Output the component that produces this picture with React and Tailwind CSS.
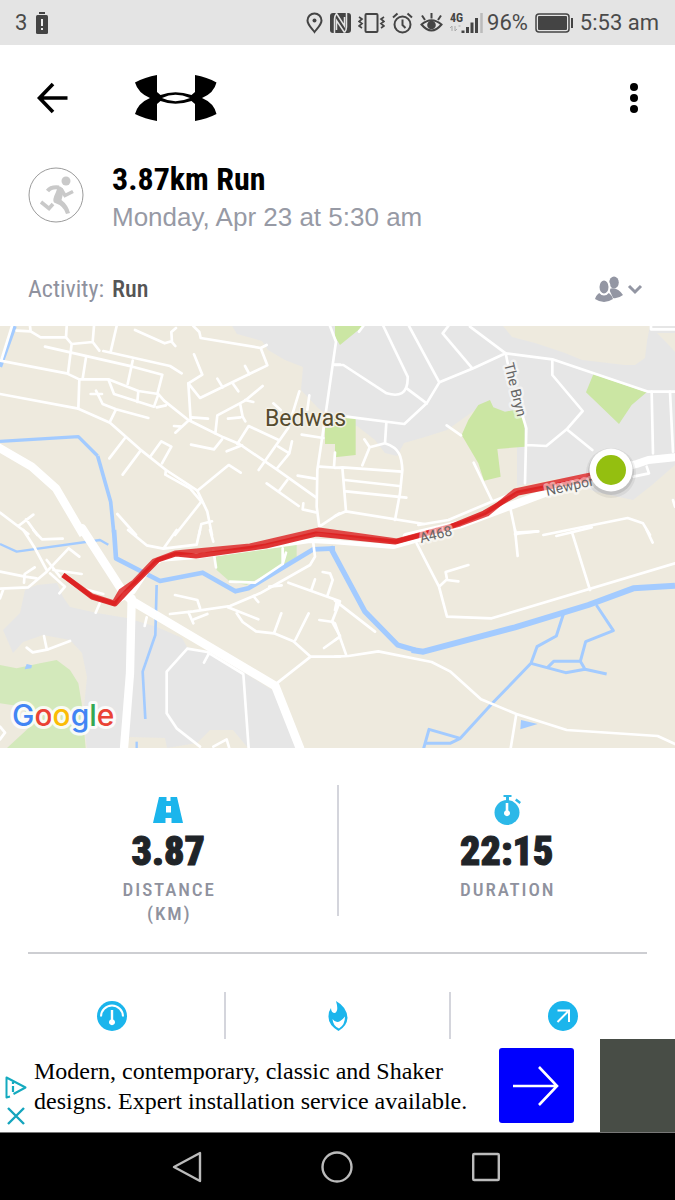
import React from "react";

const narrow = "font-['Roboto_Condensed','Liberation_Sans_Narrow',Roboto,sans-serif]";

/* Map tiles are drawn at three times screen scale, each with its own origin. */
function Tile({ x, y, children, ...rest }) {
  return (
    <g transform={`translate(${x} ${y}) scale(0.33333)`} {...rest}>
      {children}
    </g>
  );
}

const roadsNW = [
  "M0 122 L200 160 L238 178 L325 178 L415 213 L475 222 L492 242 L565 300 L670 352 L718 372 L830 448 L948 532",
  "M0 222 L235 266 L330 308 L420 388 L498 450 L592 512 L622 575 L636 645",
  "M498 450 L496 464 L570 505 L604 545 L525 645 M592 512 L686 435 L722 458 M636 604 L604 612 L597 645",
  "M50 32 L92 34 L122 52 L198 52 L215 72 L278 66 L298 92 M198 52 L200 20 M278 66 L282 18 M215 72 L204 160 M92 34 L90 18",
  "M350 18 L332 95 M310 93 L510 138 L545 160 M135 80 L398 140 L487 164 L472 222 M398 122 L383 192 M258 112 L248 176 M238 178 L235 266",
  "M325 178 L342 222 L462 260 L474 226 M415 213 L412 246 M470 262 L498 256",
  "M272 222 L306 222 M288 212 L308 252 L348 268 L445 294 M348 268 L330 305",
  "M405 30 L494 70 L514 64 L526 78 M528 24 L514 36 L516 66 M580 18 L598 36 L602 54 L782 84 L800 75 M782 84 L802 136 L600 234 L565 190 L607 164 L582 103",
  "M565 190 L572 300 M575 292 L624 296 M565 302 L526 338 M522 318 L546 320 M735 138 L748 162 M652 176 L668 202 M698 190 L715 214",
  "M788 198 L735 242 L652 286 L646 340 M720 250 L728 290 L736 304 M684 296 L722 292 M735 240 L760 246 M573 374 L642 388 L666 358 M680 394 L726 376",
  "M712 372 L746 318 L836 360 M898 214 L864 325 L776 450 M928 226 L922 270 M835 380 L868 400 L832 444 M868 400 L876 364 M820 250 L842 270",
  "M905 344 L970 354 M960 440 L1020 444 M1005 398 L1002 440 M893 467 L946 476 M800 490 L896 558 M862 480 L838 512 M910 550 L908 568 L948 577",
  "M990 18 L1008 65 L970 330 L952 450 L950 560 L958 620 L1018 580 M1004 134 L1020 134",
  "M375 354 L328 415 M420 394 L368 464 M452 408 L484 364 L514 380 L486 430 M352 582 L408 645 M0 578 L85 642 M100 584 L55 618 M78 598 L112 645",
];
const roadsNE = [
  "M405 20 L512 100 L652 118 L940 215 L1020 215 M512 100 L415 145 L313 187 L275 250 L208 312 L35 290",
  "M145 18 L218 170 C220 225 190 230 155 220 L25 135 L0 135 M215 205 L275 250 M222 18 L313 187 M340 18 L323 40 L412 145 M85 18 L72 35",
  "M512 100 L518 130 M562 285 L574 325 L570 490 M574 375 L634 378 L695 328 L743 273 L652 165 L652 120 M695 328 L772 390",
  "M154 308 L150 370 L104 382 L82 436 M104 382 L88 358 M150 370 C195 385 200 410 202 450 L195 520 L180 600",
  "M0 444 L22 442 L200 455 M22 442 L33 574 M30 480 L192 498 M34 514 L214 533 M0 588 L33 574 L268 612",
  "M335 316 L378 346 M416 428 L470 540 M250 615 L340 600 L470 545 L545 515 M950 215 L954 400 M1005 215 L1014 395 M948 18 L948 28 L1020 28",
  "M525 560 L543 645 M625 645 L878 594 L924 610 L945 645 M543 638 L610 634 M1014 540 L1020 560",
  "M895 470 L942 460 L935 440",
];
const roadsSW = [
  "M70 0 L105 55 L140 120 M100 0 L126 28 L188 26 M0 125 L75 140 L110 145 M0 176 L85 172 L140 125 L206 55 L238 80 M72 158 L74 132 L104 112 M0 205 L10 178",
  "M160 120 L245 132 M140 90 L180 140 M150 130 L195 170 L178 190 M255 178 L310 192 M300 218 L287 248 M384 0 L440 46 L490 56 L590 44 L600 0 M490 56 L530 0 M630 0 L640 35 M640 60 L648 112",
  "M80 353 L98 367 L145 358 L210 333 M132 318 L140 356 M440 262 L434 288 M0 590 L15 608 L0 628",
  "M525 195 L592 210 L600 234 M510 252 L580 244 L690 228 L780 190 L930 105 L945 80 L940 40 M565 246 L580 280 M582 268 L622 252 M760 198 L775 216",
  "M690 155 L765 158 L848 102 L858 68 M808 170 L845 166 M848 102 L848 55",
  "M684 232 L775 268 M710 250 L728 276 L768 304 L822 310 L880 334 L932 380 L1020 380 M932 380 L830 460 M822 310 L844 250 M886 330 L926 250",
  "M865 158 L1020 214 L996 275 L1020 318 M968 126 L990 130 L998 150 L982 198 M945 148 L934 180 M958 270 L1000 276 M972 354 L1020 320",
  "M562 356 L622 366 L730 432 L746 655 M562 356 L500 425 L500 550 L530 595 L600 650 M628 368 L612 398 M640 650 L680 628 L688 655",
];
const roadsSE = [
  "M0 380 L40 378 L130 364 L290 396 L345 424 L438 508 L544 552 L695 600 L968 618 L1020 642 M544 552 L527 655",
  "M245 40 L312 170 L336 260 L470 265 L1020 100 M312 170 L336 148 L332 126 L400 105 M336 150 L370 154",
  "M540 0 L548 78 M540 12 L608 4 M664 18 L770 -8 M712 10 L765 180 M935 0 L953 38 M0 212 L120 305 M5 215 L0 240 M0 280 L34 376 M0 330 L12 322",
];

function Paths({ items }) {
  return items.map((d) => <path key={d} d={d} />);
}

function RouteMap() {
  return (
    <svg className="block w-full" viewBox="0 326 675 422" role="img" aria-label="Route map of Bedwas">
      <rect x="0" y="326" width="675" height="422" fill="#eeeade" />
      <g fill="#e6e6e6">
        <path d="M232 326L237 334L262 341L268 350L285 360L303 367L301 390L318 408L340 424L357 426L375 440L385 453L397 456L404 443L425 437L447 430L475 410L520 430L517 447L517 486L560 478L596 492L633 500L652 485L675 465V326Z" />
        <path d="M25 590L37 585L57 583L63 597L70 607L97 613L127 618L157 627L182 638L187 647L207 652L240 670L277 693L300 748H248L233 730H210L197 743L167 748L165 738L130 737L120 748H87L83 717L87 677L82 653L70 640L43 635L23 642L13 653L3 630L20 613Z" />
      </g>
      <g fill="#eeeade">
        <path d="M503 326L512 337L535 343L565 353L582 360L625 365L635 365L645 358L647 341L650 326Z" />
        <path d="M657 333H675V352L666 342Z" />
      </g>
      <g fill="#cbe6a3">
        <Tile x="335" y="320">
          <path d="M0 18H85L15 75L0 50ZM-10 295H62V405L0 412L0 372L-10 370Z" />
          <path d="M465 240L475 262L510 275L540 270L568 300L570 380L487 387L497 470L447 482L430 430L380 345L400 300L430 255Z" />
          <path d="M775 163L935 217L890 255L852 312L753 217Z" />
        </Tile>
        <path d="M325 428H338V456H337V444H325Z" />
      </g>
      <Tile x="0" y="530" fill="#d3e9bb">
        <path d="M0 405L50 415L120 400L170 390L210 420L235 460L245 520L257 655H20L90 590L70 530L0 520Z" />
        <path d="M645 80L650 120L690 155L740 165L850 105L890 80V40L840 45Z" />
      </Tile>

      <g fill="none" stroke="#a3cbff" strokeLinejoin="round">
        <Tile x="0" y="320">
          <path d="M44 18L0 140" strokeWidth="13" />
          <path d="M0 364L235 350L293 408" strokeWidth="10" />
          <path d="M293 408L332 545L342 645" strokeWidth="11" />
        </Tile>
        <Tile x="0" y="530">
          <path d="M342 0L348 85L480 153L608 128L706 184L745 175L940 58L1005 55" strokeWidth="14" />
          <path d="M0 42L50 65L300 30L325 44" strokeWidth="7" />
          <path d="M470 165L466 315L428 425L436 567" strokeWidth="8" />
          <path d="M410 635V655" strokeWidth="7" />
          <path d="M74 418L80 402L96 406L94 415Z" fill="#a3cbff" stroke="none" />
        </Tile>
        <Tile x="335" y="530">
          <path d="M-15 50L90 245L188 345L240 360" strokeWidth="16" />
          <path d="M230 360L265 365L540 292L760 225L895 175L1020 167" strokeWidth="18" />
          <path d="M686 250L664 318L606 350L588 400L472 520L376 625L282 598L266 655M376 625L345 640H272M588 400L692 428L750 418L815 432M638 412L656 394H736L750 418M736 394L752 335L835 302L784 225" strokeWidth="9" />
          <path d="M558 570L608 582L556 598Z" fill="#a3cbff" stroke="none" />
        </Tile>
      </g>

      <g fill="none" stroke="#ffffff" strokeWidth="8" strokeLinejoin="round" strokeLinecap="round">
        <Tile x="0" y="320">
          <Paths items={roadsNW} />
          <path d="M36 18L4 120" />
          <path d="M-15 376L95 440L168 505L250 645" strokeWidth="25" strokeLinecap="butt" />
        </Tile>
        <Tile x="335" y="320">
          <Paths items={roadsNE} />
          <path d="M215 650L380 612L560 545L760 470L905 432L940 420L1020 412" strokeWidth="24" />
        </Tile>
        <Tile x="0" y="530">
          <Paths items={roadsSW} />
          <path d="M246 -5L372 190L400 215L826 468L900 655" strokeWidth="26" />
          <path d="M395 205L390 430L372 655" strokeWidth="25" />
          <path d="M345 218L400 185L450 110L485 88L590 80L930 32L1005 36L1180 50L1260 28" strokeWidth="14" />
        </Tile>
        <Tile x="335" y="530">
          <Paths items={roadsSE} />
        </Tile>
      </g>

      <g fill="none" stroke="#dc1f1f" strokeLinejoin="round">
        <path d="M63 575L92 597L115 604L132 586L158 560L176 554L196 556L266 546L316 534L395 542L447 528L484 513L518 493L600 477" strokeWidth="5" opacity=".9" />
        <path d="M63 575L92 596L114 603L121 591L134 582L154 561L175 553L250 546L319 530L397 541L460 524L487 514L515 491L600 473" strokeWidth="5" opacity=".8" />
      </g>

      <g className="font-[Roboto,sans-serif]" paintOrder="stroke" strokeLinejoin="round">
        <text x="265" y="426" fontSize="23" fill="#554b2f" stroke="#f4f1e8" strokeWidth="3">Bedwas</text>
        <g fontSize="14" fill="#666" stroke="#fff" strokeOpacity=".5" strokeWidth="5">
          <text transform="translate(504 364) rotate(76)">The Bryn</text>
          <text transform="translate(421 543) rotate(-14)">A468</text>
          <text transform="translate(547 496) rotate(-13)">Newpor</text>
        </g>
      </g>
      <circle cx="611" cy="473" r="25" fill="#000" opacity=".06" />
      <circle cx="611" cy="472" r="23" fill="#000" opacity=".1" />
      <circle cx="611" cy="470" r="21.500" fill="#fff" />
      <circle cx="611" cy="470" r="15" fill="#94bf10" />

      <text x="12" y="726" fontSize="30" fontWeight="500" className="font-[Inter,sans-serif]" stroke="#fff" strokeOpacity=".85" strokeWidth="6" strokeLinejoin="round" paintOrder="stroke">
        <tspan fill="#4285f4">G</tspan>
        <tspan fill="#ea4335">o</tspan>
        <tspan fill="#fbbc05">o</tspan>
        <tspan fill="#4285f4">g</tspan>
        <tspan fill="#34a853">l</tspan>
        <tspan fill="#ea4335">e</tspan>
      </text>
    </svg>
  );
}

function StatusBar() {
  return (
    <div className="flex h-[45px] items-center justify-between bg-[#e4e4e4] pr-4 pl-[15px] font-[Roboto,sans-serif] text-[22px] leading-none text-[#4a4a4a]">
      <div className="flex items-center gap-2">
        <span>3</span>
        <svg className="h-[22px] w-[14px]" viewBox="0 0 14 22" fill="#444">
          <rect x="4" y="0" width="6" height="2" />
          <rect x="1" y="3" width="12" height="19" rx="1.5" />
          <path d="M6 7h2v7H6zM6 16h2v2H6z" fill="#eee" />
        </svg>
      </div>
      <div className="flex items-center gap-1">
        <div className="flex items-center gap-[7px]">
          <svg className="h-[22px] w-[17px]" viewBox="0 0 17 22" fill="none" stroke="#444" strokeWidth="2">
            <path d="M8.500 20C5 15.500 1.500 12.500 1.500 8.500a7 7 0 0 1 14 0c0 4-3.500 7-7 11.500z" />
            <circle cx="8.500" cy="8.500" r="2" fill="#444" stroke="none" />
          </svg>
          <svg className="h-[22px] w-[21px]" viewBox="0 0 21 22">
            <rect x="0" y="1" width="21" height="20" rx="3" fill="#444" />
            <path d="M6.500 1.500Q4.500 4 4.500 7V21M6.500 1.500L14.500 14V5M14.500 20.500Q16.500 18 16.500 15V1M14.500 20.500L6.500 8.500V18" stroke="#e4e4e4" strokeWidth="1.500" fill="none" />
          </svg>
          <svg className="h-[22px] w-[27px]" viewBox="0 0 27 22" fill="none" stroke="#444" strokeWidth="2">
            <rect x="7.500" y="2" width="12" height="18" rx="1" />
            <path d="M1 5l3 2-3 2.500 3 2-3 2.500 3 2M26 5l-3 2 3 2.500-3 2 3 2.500-3 2" strokeWidth="1.700" />
          </svg>
          <svg className="h-[22px] w-[21px]" viewBox="0 0 21 22" fill="none" stroke="#444" strokeWidth="2">
            <circle cx="10.500" cy="12.500" r="8" />
            <path d="M10.500 7.500v5.500l3 3M1 5.500l4.500-4M20 5.500L15.500 1.500" />
          </svg>
          <svg className="h-[22px] w-[23px]" viewBox="0 0 23 22" fill="none" stroke="#444" strokeWidth="2">
            <path d="M1.500 12.500Q11.500 4 21.500 12.500 11.500 24.500 1.500 12.500zM11.500 6.500V1M5 8L2 3.500M18 8l3-4.500" />
            <circle cx="11.500" cy="13" r="4.300" fill="#444" stroke="none" />
          </svg>
          <svg className="h-[22px] w-[33px]" viewBox="0 0 33 22">
            <text x="0" y="10" fontSize="12" fontWeight="700" fill="#444" className="font-['Roboto_Condensed',Roboto,sans-serif]">4G</text>
            <path d="M2 19v-5L0 16M5 14v5l2-2M8.500 14h2" stroke="#aaa" fill="none" />
            <path d="M13 18.500V21M17.500 15v6M22 10.500V21M26.500 6v15" stroke="#444" strokeWidth="3" />
            <path d="M31.500 1v20" stroke="#bbb" strokeWidth="2.500" />
          </svg>
        </div>
        <div className="flex items-center gap-[7px]">
          <span>96%</span>
          <svg className="h-[20px] w-[38px]" viewBox="0 0 38 20">
            <rect x="1" y="1" width="33" height="18" rx="3" fill="none" stroke="#444" strokeWidth="1.500" />
            <rect x="3" y="3" width="29" height="14" rx="1" fill="#444" />
            <rect x="36" y="5" width="2" height="10" fill="#444" />
          </svg>
          <span>5:53 am</span>
        </div>
      </div>
    </div>
  );
}

function Toolbar() {
  return (
    <header className="flex h-[105px] items-center justify-between px-[36px]">
      <div className="flex items-center gap-[66px]">
        <button type="button" aria-label="Back">
          <svg className="h-[32px] w-[32px]" viewBox="0 0 32 32" fill="none" stroke="#000" strokeWidth="3.600">
            <path d="M31.500 16H4M17 2L3.500 16 17 30" />
          </svg>
        </button>
        <svg className="h-[48px] w-[84px]" viewBox="0 0 84 48" role="img" aria-label="Under Armour">
          <path d="M23 1Q11 3 1 8.500Q4 19 16 24Q4 29 1 40Q11 45 23 47V30L26.500 27Q41 32.500 57.500 27L61 30V47Q73 45 82.500 40Q80 29 68 24Q80 19 82.500 8.500Q73 3 61 1V18L57.500 21Q41 15.500 26.500 21L23 18ZM28 24Q41 17.500 56 24Q41 30.500 28 24Z" fillRule="evenodd" />
        </svg>
      </div>
      <button type="button" aria-label="More options">
        <svg className="h-[32px] w-[10px]" viewBox="0 0 10 32">
          <circle cx="5" cy="5" r="4" />
          <circle cx="5" cy="16" r="4" />
          <circle cx="5" cy="27" r="4" />
        </svg>
      </button>
    </header>
  );
}

function Summary() {
  return (
    <section className="px-7 pt-[10px]">
      <div className="flex items-start gap-7">
        <svg className="mt-[7px] h-[56px] w-[56px] shrink-0" viewBox="0 0 56 56" fill="none" stroke="#c9c9c9" strokeWidth="4">
          <circle cx="28" cy="28" r="27" stroke="#9b9b9b" strokeWidth="1" />
          <circle cx="38" cy="14" r="4.500" fill="#c9c9c9" stroke="none" />
          <path d="M19.500 24Q23 19.500 31 20.500" />
          <path d="M30 19Q36 20 35.500 25L33.500 33Q40 38 42 46L38 47Q36 39 26 35.500Q24 33 28 25L29 22Z" fill="#c9c9c9" stroke="none" />
          <path d="M33 22L37 28.500L45 24.500M13 35L21 41.500L25 37" strokeWidth="3.600" />
        </svg>
        <div>
          <h1 className={`${narrow} text-[32px] leading-[38px] font-bold text-black`}>3.87km Run</h1>
          <p className="font-['Liberation_Sans',sans-serif] text-[26px] leading-[38px] text-[#979aa5]">Monday, Apr 23 at 5:30 am</p>
        </div>
      </div>
      <div className="flex h-[90px] items-center justify-between pt-4">
        <p className={`${narrow} flex gap-2 text-[24px] leading-8 text-[#8f929e]`}>
          <span>Activity:</span>
          <span className="font-medium text-[#555]">Run</span>
        </p>
        <button type="button" aria-label="Sharing" className="pr-1">
          <svg className="h-[28px] w-[48px]" viewBox="0 0 48 28" fill="#9396a3">
            <ellipse cx="19" cy="7.500" rx="4.800" ry="6" />
            <path d="M14 14Q22 11 28 20Q23 24 18 23Z" />
            <path d="M0 24Q2 17 9 16.500Q16 17 18 24Q9 30 0 24Z" />
            <ellipse cx="9" cy="12" rx="5.500" ry="7.500" stroke="#fff" strokeWidth="2" />
            <path d="M34 11l6 6 6-6" fill="none" stroke="#9396a3" strokeWidth="3" />
          </svg>
        </button>
      </div>
    </section>
  );
}

function Stat({ icon, value, children }) {
  return (
    <div className="flex flex-1 flex-col items-center pt-[9px]">
      {icon}
      <strong className={`${narrow} text-[40px] leading-[52px] font-black text-[#202428] [-webkit-text-stroke:1px_#202428]`}>{value}</strong>
      <span className={`${narrow} pl-[2px] text-center text-[19px] leading-6 font-medium tracking-widest text-[#8f929e]`}>{children}</span>
    </div>
  );
}

function Stats() {
  return (
    <section className="px-7 pt-[37px]">
      <div className="-mx-7 flex h-[131px]">
        <Stat
          value="3.87"
          icon={
            <svg className="h-[32px] w-[32px] shrink-0" viewBox="0 0 32 32" fill="#1bb5ec">
              <path d="M7 3H25L31 29H1Z" />
              <path d="M14.500 3h4v4h-4zM14 12h5v6.500h-5zM13.500 24h6v5h-6z" fill="#fff" />
            </svg>
          }
        >
          DISTANCE
          <br />
          (KM)
        </Stat>
        <div className="w-[2px] bg-[#d4d5dc]" />
        <Stat
          value="22:15"
          icon={
            <svg className="h-[32px] w-[32px] shrink-0" viewBox="0 0 32 32" fill="#2cb8e8">
              <circle cx="16" cy="18.500" r="12.500" />
              <path d="M12.500 1h8v2h-2.500v4h-3V3h-2.500zM25.500 4.500L30 8l-1.500 2L24 6.500z" />
              <path d="M14.700 9h2.600v7.500a3 3 0 1 1-2.600 0z" fill="#fff" />
            </svg>
          }
        >
          DURATION
        </Stat>
      </div>
      <div className="mt-[36px] h-[2px] bg-[#cdced2]" />
      <div className="-mx-7 mt-[38px] flex h-[47px] divide-x-2 divide-[#d4d5dc]">
        <div className="flex flex-1 justify-center pt-[9px]">
          <svg className="h-[30px] w-[30px]" viewBox="0 0 30 30">
            <circle cx="15" cy="15" r="15" fill="#1bb5ec" />
            <path d="M4 15.500a11 11 0 0 1 22 0" fill="none" stroke="#fff" strokeWidth="2" />
            <path d="M13.800 9h2.400v9.500a3 3 0 1 1-2.400 0z" fill="#fff" />
          </svg>
        </div>
        <div className="flex flex-1 justify-center pt-[9px]">
          <svg className="h-[30px] w-[20px]" viewBox="0 0 20 30">
            <path d="M8 0Q19 6 19.500 17Q19 25 10.500 30Q0 24 .5 15Q.7 10 3 7Q3 12 7 12Q11 10 8 0Z" fill="#1bb5ec" />
            <path d="M4.500 18Q9.500 25 17 15.500Q17 24 11 27.500Q5 25 4.500 18Z" fill="#fff" />
          </svg>
        </div>
        <div className="flex flex-1 justify-center pt-[9px]">
          <svg className="h-[30px] w-[30px]" viewBox="0 0 30 30">
            <circle cx="15" cy="15" r="15" fill="#1bb5ec" />
            <path d="M9.500 9.500H21V21M21 9.500L9.500 21" fill="none" stroke="#fff" strokeWidth="2" />
          </svg>
        </div>
      </div>
    </section>
  );
}

function AdBanner() {
  return (
    <aside className="flex h-[94px] items-stretch border-b border-[#777] bg-white">
      <div className="flex w-[34px] shrink-0 flex-col items-center justify-end gap-2 pr-[3px] pb-[7px]">
        <a href="#adchoices" aria-label="AdChoices">
          <svg className="block h-[23px] w-[22px]" viewBox="0 0 22 23" fill="none" stroke="#14aabf" strokeWidth="2" strokeLinejoin="round">
            <path d="M5 20.500L1.500 21.500V1.500L20.500 11.500L8.500 18" />
            <path d="M8 10v6M8 6v2" strokeWidth="2.200" />
          </svg>
        </a>
        <button type="button" aria-label="Close ad">
          <svg className="h-[18px] w-[18px]" viewBox="0 0 18 18" stroke="#14a4bd" strokeWidth="2.400">
            <path d="M1 1l16 16M17 1L1 17" />
          </svg>
        </button>
      </div>
      <p className="flex flex-1 items-center font-['Liberation_Serif',serif] text-[24px] leading-[30px] text-black">
        Modern, contemporary, classic and Shaker designs. Expert installation service available.
      </p>
      <a href="#offer" aria-label="Open advert" className="mt-[9px] mr-[26px] ml-3 flex size-[75px] shrink-0 items-center justify-center rounded-[3px] bg-[#0000fe]">
        <svg className="h-[40px] w-[48px]" viewBox="2 0 48 40" fill="none" stroke="#fff" strokeWidth="2.600">
          <path d="M1 20h45M28 1l18 19-18 19" />
        </svg>
      </a>
      <div className="w-[75px] shrink-0 bg-[#484d46]" />
    </aside>
  );
}

function NavBar() {
  return (
    <nav className="flex h-[67px] items-center justify-center gap-[119px] bg-black pr-[3px]">
      <button type="button" aria-label="Back">
        <svg className="h-[32px] w-[30px]" viewBox="0 0 30 32" fill="none" stroke="#bbb" strokeWidth="2.400" strokeLinejoin="round">
          <path d="M28 2v28L2 16z" />
        </svg>
      </button>
      <button type="button" aria-label="Home">
        <svg className="h-[32px] w-[32px]" viewBox="0 0 32 32" fill="none" stroke="#bbb" strokeWidth="2.400">
          <circle cx="16" cy="16" r="14.500" />
        </svg>
      </button>
      <button type="button" aria-label="Recent apps">
        <svg className="h-[30px] w-[28px]" viewBox="0 0 28 30" fill="none" stroke="#bbb" strokeWidth="2.400">
          <rect x="1.200" y="2" width="25.600" height="26" rx="1" />
        </svg>
      </button>
    </nav>
  );
}

export default function App() {
  return (
    <div className="flex min-h-screen flex-col bg-white">
      <StatusBar />
      <Toolbar />
      <Summary />
      <RouteMap />
      <Stats />
      <AdBanner />
      <NavBar />
    </div>
  );
}
